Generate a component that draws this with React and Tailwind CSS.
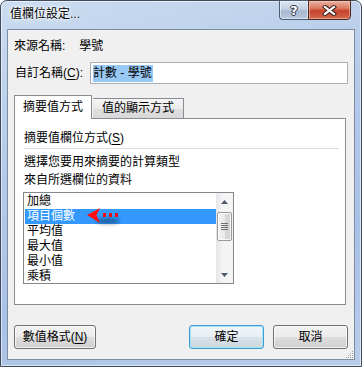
export default function App() {
  const items = ["加總", "項目個數", "平均值", "最大值", "最小值", "乘積"];
  return (
    <div className="w-[362px] h-[367px] relative font-['Liberation_Sans','Noto_Sans_CJK_TC',sans-serif] text-[12px] text-black bg-white">
      <div className="w-full h-full flex flex-col rounded-t-[7px] border border-[#3f4b5b] bg-[linear-gradient(165deg,#cbdcf0_0%,#b6cbe9_35%,#a9c1e6_70%,#b9cdea_100%)] shadow-[inset_0_0_0_1px_rgba(255,255,255,0.55)]">
        {/* title bar */}
        <div className="h-[28px] flex items-start shrink-0">
          <div className="pl-[9px] pt-[5px] leading-[16px] [text-shadow:0_0_6px_#fff,0_0_3px_#fff,0_0_2px_#fff]">
            值欄位設定...
          </div>
          <div className="ml-auto mr-[10px] -mt-px flex h-[20px]">
            <div className="w-[29px] h-full flex items-center justify-center border border-[#4b5b72] border-r-0 rounded-bl-[4px] bg-[linear-gradient(180deg,#dbe5f1_0%,#c3d1e4_45%,#a7b9d1_55%,#b9c9de_100%)] shadow-[inset_0_0_0_1px_rgba(255,255,255,0.5)]">
              <span className="text-white font-bold text-[13px] leading-[13px] font-['DejaVu_Sans',sans-serif] [text-shadow:1px_0_0_#2b3443,-1px_0_0_#2b3443,0_1px_0_#2b3443,0_-1px_0_#2b3443]">
                ?
              </span>
            </div>
            <div className="w-[43px] h-full flex items-center justify-center border border-[#4b2a22] rounded-br-[4px] bg-[linear-gradient(180deg,#eab2a3_0%,#dc7a62_40%,#c5432a_55%,#d46a4f_100%)] shadow-[inset_0_0_0_1px_rgba(255,220,210,0.45)]">
              <svg width="15" height="11" viewBox="0 0 15 11">
                <path d="M3 2 L12 9 M12 2 L3 9" stroke="#3a2520" strokeWidth="4.2" strokeLinecap="square" />
                <path d="M3 2 L12 9 M12 2 L3 9" stroke="#ffffff" strokeWidth="2.2" strokeLinecap="square" />
              </svg>
            </div>
          </div>
        </div>

        {/* client area */}
        <div className="mx-[6px] h-[331px] shrink-0 border border-[#7b8ca5] bg-[#f0f0f0] flex flex-col pl-[6px] pr-[6px] relative">
          {/* source name */}
          <div className="mt-[6px] h-[20px] flex items-center leading-[16px]">
            <span>來源名稱:</span>
            <span className="ml-[14px]">學號</span>
          </div>
          {/* custom name */}
          <div className="mt-[6px] h-[22px] flex items-center">
            <div className="w-[76px] pl-[1px] leading-[16px]">
              自訂名稱(<span className="underline underline-offset-2">C</span>):
            </div>
            <div className="flex-1 h-full border border-[#abadb3] bg-white flex items-center pl-[2px]">
              <span className="bg-[#99c8f3] leading-[17px] pr-[1px]">計數 - 學號</span>
            </div>
          </div>

          {/* tabs */}
          <div className="mt-[11px] h-[23px] flex items-end relative z-10 shrink-0">
            <div className="w-[78px] h-[24px] -mb-px bg-white border border-b-0 border-[#898c95] flex items-center justify-center pb-[1px] leading-[16px]">
              摘要值方式
            </div>
            <div className="w-[91px] h-[20px] ml-px border border-b-0 border-l-0 border-[#898c95] bg-[linear-gradient(180deg,#f5f5f5_0%,#ebebeb_50%,#dedede_55%,#d9d9d9_100%)] flex items-center justify-center pb-[2px] leading-[16px]">
              值的顯示方式
            </div>
          </div>

          {/* panel */}
          <div className="w-[332px] h-[187px] border border-[#898c95] bg-white flex flex-col pl-[9px] shrink-0">
            <div className="mt-[11px] h-[16px] leading-[16px]">
              摘要值欄位方式(<span className="underline underline-offset-2">S</span>)
            </div>
            <div className="mt-[2px] h-px w-[315px] bg-[#d5dfe5]" />
            <div className="mt-[5px] h-[16px] leading-[16px]">選擇您要用來摘要的計算類型</div>
            <div className="mt-[2px] h-[16px] leading-[16px]">來自所選欄位的資料</div>

            {/* list box */}
            <div className="mt-[4px] -ml-px w-[211px] h-[92px] border border-[#828790] bg-white flex overflow-hidden">
              <div className="flex-1 pt-[1px] pl-[1px] overflow-hidden">
                {items.map((t, i) => (
                  <div
                    key={t}
                    className={
                      i === 1
                        ? "h-[15px] leading-[15px] pl-[2px] bg-[#3399ff] text-white"
                        : "h-[15px] leading-[15px] pl-[2px]"
                    }
                  >
                    {t}
                  </div>
                ))}
              </div>
              {/* scrollbar */}
              <div className="w-[17px] h-full flex flex-col bg-[linear-gradient(90deg,#e6e6e8_0%,#f4f4f5_40%,#f4f4f5_100%)]">
                <div className="h-[17px] flex items-center justify-center">
                  <svg width="7" height="4" viewBox="0 0 7 4">
                    <path d="M3.5 0 L7 4 L0 4 Z" fill="#4d5b6e" />
                  </svg>
                </div>
                <div className="flex-1 relative">
                  <div className="absolute left-[1px] top-[2px] w-[15px] h-[29px] rounded-[2px] border border-[#9a9a9a] bg-[linear-gradient(90deg,#f4f4f4_0%,#e9e9e9_50%,#d9d9d9_55%,#d4d4d4_100%)] shadow-[inset_0_0_0_1px_rgba(255,255,255,0.8)] flex flex-col items-center justify-center gap-[1px]">
                    <div className="w-[7px] h-px bg-[#6f6f6f]" />
                    <div className="w-[7px] h-px bg-[#6f6f6f]" />
                    <div className="w-[7px] h-px bg-[#6f6f6f]" />
                    <div className="w-[7px] h-px bg-[#6f6f6f]" />
                  </div>
                </div>
                <div className="h-[17px] flex items-center justify-center">
                  <svg width="7" height="4" viewBox="0 0 7 4">
                    <path d="M0 0 L7 0 L3.5 4 Z" fill="#4d5b6e" />
                  </svg>
                </div>
              </div>
            </div>
          </div>

          {/* buttons */}
          <div className="mt-[20px] h-[24px] flex">
            <button className="w-[82px] h-full rounded-[3px] border border-[#707070] bg-[linear-gradient(180deg,#f2f2f2_0%,#ebebeb_50%,#dddddd_51%,#cfcfcf_100%)] shadow-[inset_0_0_0_1px_rgba(255,255,255,0.7)] flex items-center justify-center leading-[16px]">
              數值格式(<span className="underline underline-offset-2">N</span>)
            </button>
            <div className="ml-auto flex gap-[9px]">
              <button className="w-[75px] h-full rounded-[3px] border border-[#3c9ad6] bg-[linear-gradient(180deg,#f0f5f8_0%,#e8eef2_50%,#d9e2e8_51%,#ccd7de_100%)] shadow-[inset_0_0_0_1px_#a9e3fa] flex items-center justify-center leading-[16px]">
                確定
              </button>
              <button className="w-[75px] h-full rounded-[3px] border border-[#707070] bg-[linear-gradient(180deg,#f2f2f2_0%,#ebebeb_50%,#dddddd_51%,#cfcfcf_100%)] shadow-[inset_0_0_0_1px_rgba(255,255,255,0.7)] flex items-center justify-center leading-[16px]">
                取消
              </button>
            </div>
          </div>

          {/* resize grip */}
          <svg className="absolute right-0 bottom-0" width="10" height="10" viewBox="0 0 10 10">
            <g fill="#a0a0a0">
              <rect x="8" y="2" width="1" height="1" />
              <rect x="6" y="4" width="1" height="1" />
              <rect x="8" y="4" width="1" height="1" />
              <rect x="4" y="6" width="1" height="1" />
              <rect x="6" y="6" width="1" height="1" />
              <rect x="8" y="6" width="1" height="1" />
              <rect x="2" y="8" width="1" height="1" />
              <rect x="4" y="8" width="1" height="1" />
              <rect x="6" y="8" width="1" height="1" />
              <rect x="8" y="8" width="1" height="1" />
            </g>
          </svg>
        </div>
      </div>

      {/* red arrow annotation */}
      <svg className="absolute left-[84px] top-[205px]" width="42" height="26" viewBox="0 0 42 26">
        <defs>
          <filter id="blur" x="-50%" y="-100%" width="200%" height="300%">
            <feGaussianBlur stdDeviation="2" />
          </filter>
        </defs>
        <ellipse cx="24" cy="16" rx="12" ry="2.5" fill="#000" opacity="0.45" filter="url(#blur)" />
        <polygon points="3,10 16,3 12.5,10 16,18" fill="#ff1010" />
        <rect x="19" y="8" width="3" height="4" fill="#e81010" />
        <rect x="25" y="8" width="3" height="4" fill="#e81010" />
        <rect x="31" y="8" width="3" height="4" fill="#e81010" />
      </svg>
    </div>
  );
}
